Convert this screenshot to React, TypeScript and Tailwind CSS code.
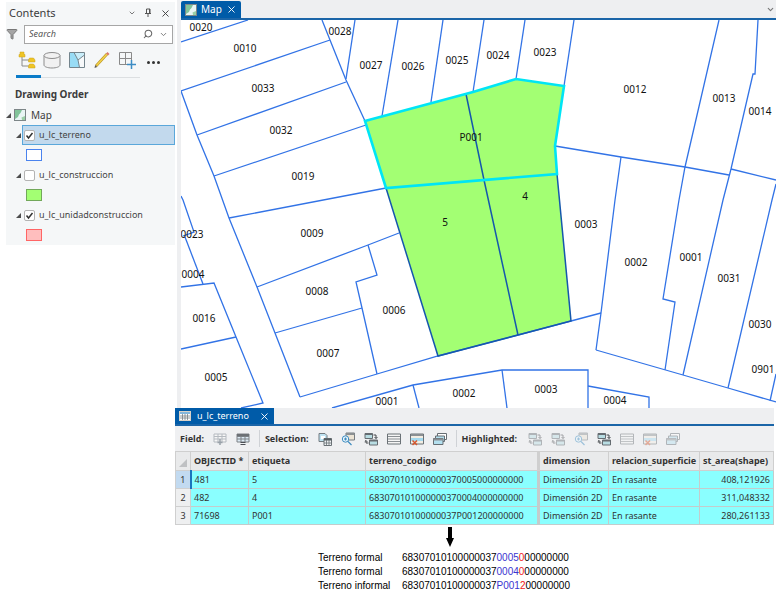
import React, { useState } from 'react';
import { ChevronDown, Filter, Search, X } from 'lucide-react';

type Point = [number, number];

const parcelLines: string[] = [
    '181,42 248,20',
    '181,91 330,40',
    '322,20 330,40 346,80 365,121',
    '355,20 346,79',
    '197,135 346,82',
    '214,176 366,125',
    '181,91 197,135 214,176 229,218 257,287 275,333 300,397',
    '229,218 386,188',
    '181,196 183,200 194,232 183,236',
    '185,237 203,284',
    '181,287 214,283 236,337 263,403 241,408',
    '181,349 236,337',
    '257,287 368,245 399,233',
    '368,245 377,275 356,282 362,308 377,374',
    '275,333 362,308',
    '300,397 377,374 438,356 518,335 571,321 601,313',
    '332,408 413,385 502,370 588,370 588,408',
    '413,385 419,408',
    '502,370 507,408',
    '588,386 649,397 649,408',
    '398,20 382,116',
    '443,20 431,102',
    '484,20 473,92',
    '525,20 516,79',
    '574,20 564,86',
    '555,146 621,157 685,167 729,175',
    '621,157 615,200 601,313 596,350',
    '719,20 685,167 679,200 663,299 675,302 665,370',
    '758,20 755,74 753,74 731,169 723,200 683,375',
    '731,169 776,180',
    '776,184 772,200 728,388',
    '596,350 683,375 728,388 776,402',
    '776,374 770,401',
];

const parcelLabels: { text: string; at: Point }[] = [
    { text: '0020', at: [201, 27] },
    { text: '0010', at: [245, 48] },
    { text: '0033', at: [263, 88] },
    { text: '0032', at: [281, 130] },
    { text: '0019', at: [303, 176] },
    { text: '0028', at: [340, 31] },
    { text: '0027', at: [371, 65] },
    { text: '0026', at: [413, 66] },
    { text: '0025', at: [457, 60] },
    { text: '0024', at: [498, 55] },
    { text: '0023', at: [545, 52] },
    { text: '0012', at: [635, 89] },
    { text: '0013', at: [724, 98] },
    { text: '0014', at: [760, 111] },
    { text: 'P001', at: [471, 137] },
    { text: '4', at: [525, 196] },
    { text: '5', at: [445, 222] },
    { text: '0023', at: [192, 234] },
    { text: '0004', at: [193, 274] },
    { text: '0016', at: [204, 318] },
    { text: '0005', at: [216, 377] },
    { text: '0009', at: [312, 233] },
    { text: '0008', at: [317, 291] },
    { text: '0007', at: [328, 353] },
    { text: '0006', at: [394, 310] },
    { text: '0001', at: [387, 401] },
    { text: '0002', at: [464, 393] },
    { text: '0003', at: [546, 389] },
    { text: '0003', at: [586, 224] },
    { text: '0002', at: [636, 262] },
    { text: '0001', at: [691, 257] },
    { text: '0031', at: [729, 278] },
    { text: '0030', at: [760, 324] },
    { text: '0901', at: [763, 369] },
    { text: '0004', at: [615, 400] },
];

const rows = [
    { id: '481', etiqueta: '5', codigo: '683070101000000370005000000000', area: '408,121926' },
    { id: '482', etiqueta: '4', codigo: '683070101000000370004000000000', area: '311,048332' },
    { id: '71698', etiqueta: 'P001', codigo: '68307010100000037P001200000000', area: '280,261133' },
];

const codes = [
    { label: 'Terreno formal', parcel: '0005', kind: '0' },
    { label: 'Terreno formal', parcel: '0004', kind: '0' },
    { label: 'Terreno informal', parcel: 'P001', kind: '2' },
];

const MapIcon: React.FC = () => (
    <svg viewBox="0 0 12 12" className="h-3 w-3 shrink-0" aria-hidden="true">
        <rect x="0.5" y="0.5" width="11" height="11" fill="#e9f5f4" stroke="#7d8688" />
        <path d="M1 1h7L6.500 4 5 5.500 4 8 1 10Z" fill="#82c49a" />
        <path d="M7.500 8.500 11 7v4H8Z" fill="#9bcfa6" />
    </svg>
);

const TableIcon: React.FC = () => (
    <svg viewBox="0 0 12 10" className="h-2.5 w-3 shrink-0" aria-hidden="true">
        <rect x="0.5" y="0.5" width="11" height="9" fill="#fff" stroke="#d9d2c8" />
        <path d="M1 1h10v2H1z" fill="#82b6dc" />
        <path d="M3.500 3v6M6 3v6M8.500 3v6M1 5h10M1 7h10" stroke="#6c747a" strokeWidth="0.7" />
    </svg>
);

const DrawingOrderIcon = () => (
    <svg viewBox="0 0 18 18" className="h-[18px] w-[18px]" aria-hidden="true">
        <path d="M4 6v9h7M4 9h7" fill="none" stroke="#8a8a8a" />
        <path d="M1 6V3.500h1V1h4v2.500h1V6ZM10.500 11V9l1-2h4l1.500 2v2ZM10.500 17v-2l1-2h4l1.500 2v2Z" fill="#efc526" stroke="#c9a11c" strokeWidth="0.5" />
    </svg>
);

const DataSourceIcon = () => (
    <svg viewBox="0 0 18 18" className="h-[18px] w-[18px]" fill="#f1f1f1" stroke="#8d8d8d" aria-hidden="true">
        <path d="M1 4.500v9.500c0 1.700 3.500 3 8 3s8-1.300 8-3V4.500" />
        <ellipse cx="9" cy="4.500" rx="8" ry="3" />
    </svg>
);

const SelectionIcon = () => (
    <svg viewBox="0 0 18 18" className="h-[18px] w-[18px]" aria-hidden="true">
        <path d="M1.500 1.500h15v15h-15z" fill="#f7f9fa" />
        <path d="M1.500 1.500h4.500L10 9l1.500 7.500h-10Z" fill="#98dcf5" />
        <path d="M6 1.500h10.500V4L10 9Z" fill="#c9eefa" />
        <path d="M1.500 1.500h15v15h-15z" fill="none" stroke="#74858d" />
        <path d="M6 1.500 10 9l6.500-5M10 9l1.500 7.500" fill="none" stroke="#74858d" />
    </svg>
);

const EditingIcon = () => (
    <svg viewBox="0 0 18 18" className="h-[18px] w-[18px]" aria-hidden="true">
        <path d="M3 15 14 3" stroke="#b69324" strokeWidth="2.600" />
        <path d="M3.500 14.500 14 3" stroke="#f4d24a" strokeWidth="1.600" />
        <path d="m1.500 17 .7-3 2 2Z" fill="#5f5a50" />
        <path d="m13 2.500 1.500-1.500 2 2L15 4.500Z" fill="#d9786a" />
    </svg>
);

const SnappingIcon = () => (
    <svg viewBox="0 0 18 18" className="h-[18px] w-[18px]" fill="none" aria-hidden="true">
        <path d="M9 13.500H1.500v-12h12V9M7.500 1.500v12M1.500 7.500h12" stroke="#8a8a8a" />
        <path d="M13.500 9v9M9 13.500h9" stroke="#3c8cc4" strokeWidth="1.500" />
    </svg>
);

const PinIcon = () => (
    <svg viewBox="0 0 8 10" className="h-2.5 w-2" fill="none" stroke="#555" aria-hidden="true">
        <path d="M2.500 5.500V1h3.500v4.500M1 5.500h6M4 5.500V9M5.500 1v4.500" />
    </svg>
);

type GlyphName = 'addField' | 'calcField' | 'byAttributes' | 'zoom' | 'switch' | 'clear' | 'delete' | 'copy';

const glyphs: Record<GlyphName, React.ReactNode> = {
    addField: (
        <>
            <path d="M1 2h12v8H1zM1 4.500h12M1 7h12M5 2v8M9 2v8" fill="#f6f6f6" stroke="#b5bac0" />
            <path d="M7 7v6M4.500 10.500h5" stroke="#9aa2aa" strokeWidth="1.500" />
        </>
    ),
    calcField: (
        <>
            <path d="M1 2h12v8H1zM1 4.500h12M1 7h12M5 2v8M9 2v8" fill="#dceaf4" stroke="#7c8186" />
            <path d="M1 2h12v2H1z" fill="#6c7075" />
            <path d="M4.500 10.500h5M4.500 12.500h5" stroke="#4a4f55" />
        </>
    ),
    byAttributes: (
        <>
            <path d="M1 1.500h6l2 2v6H1z" fill="#bfe3f2" stroke="#737b80" />
            <path d="M3 4h4v3H3z" fill="#fff" />
            <path d="M6 6.500h7.500v7H6z" fill="#eef2f4" stroke="#6b7277" />
            <path d="M6 6.500h7.500v2H6z" fill="#555c61" />
            <path d="M6 11h7.500M8.500 8v5M11 8v5" stroke="#6b7277" strokeWidth="0.800" />
        </>
    ),
    zoom: (
        <>
            <path d="M5 1h8.500v7H5z" fill="#ece4d5" stroke="#777c80" />
            <path d="M5 1h8.500v2H5z" fill="#8b9093" />
            <circle cx="4.500" cy="7" r="3.200" fill="#eaf6fd" stroke="#3e8cc0" />
            <path d="M3 7h3M4.500 5.500v3M7 9.500l3.500 3.500" stroke="#3e8cc0" strokeWidth="1.200" />
        </>
    ),
    switch: (
        <>
            <path d="M1 1.500h7.500v5H1zM5.500 8h8v5h-8z" fill="#b8dde3" stroke="#666d72" />
            <path d="M1 1.500h7.500v1.500H1zM5.500 8h8v1.500h-8z" fill="#666d72" />
            <path d="M9.500 3h2.500v3.500M10.500 5 12 6.500 13.500 5M4.500 11H2V8.500M.7 9.800 2 8.500l1.300 1.300" fill="none" stroke="#44494d" />
        </>
    ),
    clear: (
        <>
            <path d="M.5 2h13v10H.5z" fill="#f5f5f5" stroke="#6b7277" />
            <path d="M1 4.500h12M1 7h12M1 9.500h12" stroke="#8a8f93" />
        </>
    ),
    delete: (
        <>
            <path d="M.5 2h13v10H.5z" fill="#f2ede3" stroke="#6b7277" />
            <path d="M1 6h12v3H1z" fill="#a4d9ee" />
            <path d="M1 2h12v2H1z" fill="#8a8f93" />
            <path d="M2.500 8.500 7 13M7 8.500 2.500 13" stroke="#d4572f" strokeWidth="1.500" />
        </>
    ),
    copy: (
        <>
            <path d="M4.500 1.500h9v6h-9z" fill="#fff" stroke="#666d72" />
            <path d="M2.500 4h9v5.500h-9z" fill="#b4e0ef" stroke="#666d72" />
            <path d="M.5 6.500h9.500v6H.5z" fill="#b4e0ef" stroke="#666d72" />
            <path d="M.5 6.500h9.500v2H.5z" fill="#8a8f93" />
        </>
    ),
};

const ToolButton: React.FC<{ name: GlyphName; label: string; muted?: boolean }> = ({ name, label, muted }) => (
    <button type="button" aria-label={label} className={muted ? 'h-3.5 w-3.5 shrink-0 opacity-45' : 'h-3.5 w-3.5 shrink-0'}>
        <svg viewBox="0 0 14 14" className="h-3.5 w-3.5" fill="none" aria-hidden="true">
            {glyphs[name]}
        </svg>
    </button>
);

const Triangle: React.FC = () => (
    <svg viewBox="0 0 5 5" className="h-[5px] w-[5px] shrink-0" aria-hidden="true">
        <path d="M5 0v5H0Z" fill="#4d4d4d" />
    </svg>
);

interface LayerProps {
    name: string;
    swatch: string;
    initial?: boolean;
    selected?: boolean;
}

const Layer: React.FC<LayerProps> = ({ name, swatch, initial = false, selected = false }) => {
    const [visible, setVisible] = useState(initial);
    return (
        <li>
            <div className="flex h-5 items-center">
                <button type="button" aria-label={`Collapse ${name}`} className="flex w-4 shrink-0 justify-center pl-2">
                    <Triangle />
                </button>
                <label
                    className={`flex h-5 flex-1 items-center gap-1 border pl-px text-[9px] text-[#444] ${selected ? 'border-[#5aa7da] bg-[#c2d9ed]' : 'border-transparent'}`}
                >
                    <span className="grid h-[11px] w-[11px] shrink-0">
                        <input
                            type="checkbox"
                            checked={visible}
                            onChange={(e) => setVisible(e.target.checked)}
                            className="col-start-1 row-start-1 h-[11px] w-[11px] appearance-none rounded-xs border border-[#b3b3b3] bg-white"
                        />
                        {visible && (
                            <svg viewBox="0 0 11 11" className="pointer-events-none col-start-1 row-start-1 h-[11px] w-[11px]" aria-hidden="true">
                                <path d="m2.500 5.500 2 2.500 4-5" fill="none" stroke="#333" strokeWidth="1.500" />
                            </svg>
                        )}
                    </span>
                    {name}
                </label>
            </div>
            <div className="flex h-5 items-center pl-5">
                <span className={`h-3 w-4 border ${swatch}`} />
            </div>
        </li>
    );
};

const ContentsPanel: React.FC = () => (
    <aside className="ml-1.5 mt-0.5 w-[169px] shrink-0 self-start bg-[#f5f7f8] text-[#3c3c3c]">
        <div className="flex h-[22px] items-center pl-[3px] pr-1">
            <h2 className="flex-1 text-[11px]">Contents</h2>
            <div className="flex items-center gap-2">
                <button type="button" aria-label="Menu"><ChevronDown size={8} /></button>
                <button type="button" aria-label="Pin"><PinIcon /></button>
                <button type="button" aria-label="Close"><X size={11} strokeWidth={2} /></button>
            </div>
        </div>
        <div className="flex h-5 items-center gap-1.5 pr-0.5">
            <Filter size={12} fill="#a5a5a5" stroke="#777" className="shrink-0" />
            <div className="flex h-[19px] min-w-0 flex-1 items-center gap-1.5 border border-[#a6a6a6] bg-white px-1">
                <input type="text" aria-label="Search" placeholder="Search" className="min-w-0 flex-1 text-[9px] italic outline-none placeholder:text-[#555]" />
                <Search size={10} strokeWidth={2.5} className="shrink-0 -scale-x-100 text-[#666]" />
                <ChevronDown size={9} strokeWidth={2.5} className="shrink-0 text-[#777]" />
            </div>
        </div>
        <nav className="flex items-center gap-[7px] pl-3 pt-[7px]">
            <button type="button" aria-label="List by drawing order"><DrawingOrderIcon /></button>
            <button type="button" aria-label="List by data source"><DataSourceIcon /></button>
            <button type="button" aria-label="List by selection"><SelectionIcon /></button>
            <button type="button" aria-label="List by editing"><EditingIcon /></button>
            <button type="button" aria-label="List by snapping"><SnappingIcon /></button>
            <button type="button" aria-label="More" className="flex gap-[2px] pl-1 pt-1">
                <span className="h-[3px] w-[3px] rounded-full bg-[#333]" />
                <span className="h-[3px] w-[3px] rounded-full bg-[#333]" />
                <span className="h-[3px] w-[3px] rounded-full bg-[#333]" />
            </button>
        </nav>
        <div className="ml-2.5 mt-1.5 h-[3px] w-[124px] border-b border-[#dcdfe1]">
            <div className="h-[3px] w-[25px] bg-[#0a7bc8]" />
        </div>
        <h3 className="pb-[3px] pl-[9px] pt-2 text-[10px] leading-4 font-bold">Drawing Order</h3>
        <div className="flex h-5 items-center gap-[3px]">
            <button type="button" aria-label="Collapse Map"><Triangle /></button>
            <MapIcon />
            <span className="pl-0.5 text-[10px]">Map</span>
        </div>
        <ul>
            <Layer name="u_lc_terreno" swatch="border-[#4a83ee] bg-white" initial selected />
            <Layer name="u_lc_construccion" swatch="border-[#72a85a] bg-[#a3ff73]" />
            <Layer name="u_lc_unidadconstruccion" swatch="border-[#ff6565] bg-[#ffbebe]" initial />
        </ul>
    </aside>
);

const MapView: React.FC = () => (
    <section className="min-w-0 flex-1">
        <div className="flex h-5 items-end justify-between border-b-2 border-[#1b65a8] bg-[#eeeff1]">
            <div className="flex h-[17px] w-[60px] items-center gap-1 rounded-t-xs bg-[#005ba8] px-1 text-[10px] text-white">
                <MapIcon />
                <span className="flex-1">Map</span>
                <button type="button" aria-label="Close Map"><X size={11} strokeWidth={2} /></button>
            </div>
            <button type="button" aria-label="View list" className="mb-1 mr-px text-[#777]"><ChevronDown size={9} strokeWidth={3} /></button>
        </div>
        <svg viewBox="181 20 595 388" className="block w-full bg-white" role="img" aria-label="Parcel map">
            <path d="M365 121 473 92 516 79 564 86 555 146 557 174 571 321 518 335 438 356 386 188Z" fill="#a3ff73" />
            {parcelLines.map((points) => (
                <polyline key={points} points={points} fill="none" stroke="#3273e6" strokeWidth="1.300" />
            ))}
            <path d="M466 94 484 180 518 335M386 188 438 356 518 335 571 321 557 174" fill="none" stroke="#1557ad" strokeWidth="1.500" />
            <path d="M365 121 473 92 516 79 564 86 555 146 557 174 386 188Z" fill="none" stroke="#00e5f5" strokeWidth="2.600" />
            {parcelLabels.map(({ text, at }) => (
                <text key={`${text}-${at[0]}`} x={at[0]} y={at[1] + 4} textAnchor="middle" fontSize="10" fill="#111">
                    {text}
                </text>
            ))}
        </svg>
    </section>
);

const AttributeTable: React.FC = () => (
    <section className="ml-[175px] mr-0.5 text-[#333]">
        <div className="border-b-2 border-[#1b65a8] bg-[#eeeff1]">
            <div className="flex h-4 w-[99px] items-center gap-1.5 bg-[#005ba8] px-1 text-[9px] text-white">
                <TableIcon />
                <span className="flex-1">u_lc_terreno</span>
                <button type="button" aria-label="Close u_lc_terreno"><X size={11} strokeWidth={2} /></button>
            </div>
        </div>
        <div className="flex h-[25px] items-center gap-[9px] bg-[#eff0f2] pl-[5px] text-[9px] font-bold">
            <span>Field:</span>
            <ToolButton name="addField" label="Add field" />
            <ToolButton name="calcField" label="Calculate field" />
            <span className="h-[17px] w-px bg-[#cfd2d6]" />
            <span className="-ml-1">Selection:</span>
            <ToolButton name="byAttributes" label="Select by attributes" />
            <ToolButton name="zoom" label="Zoom to selection" />
            <ToolButton name="switch" label="Switch selection" />
            <ToolButton name="clear" label="Clear selection" />
            <ToolButton name="delete" label="Delete selection" />
            <ToolButton name="copy" label="Copy selection" />
            <span className="h-[17px] w-px bg-[#cfd2d6]" />
            <span className="-ml-1 mr-0.5">Highlighted:</span>
            <ToolButton name="switch" label="Unselect highlighted" muted />
            <ToolButton name="switch" label="Reselect highlighted" muted />
            <ToolButton name="zoom" label="Zoom to highlighted" muted />
            <ToolButton name="switch" label="Switch highlighted" />
            <ToolButton name="clear" label="Clear highlighted" muted />
            <ToolButton name="delete" label="Delete highlighted" muted />
            <ToolButton name="copy" label="Copy highlighted" muted />
        </div>
        <table className="w-full table-fixed border-collapse text-left text-[9px] whitespace-nowrap">
            <colgroup>
                <col className="w-[15px]" />
                <col className="w-[58px]" />
                <col className="w-[117px]" />
                <col />
                <col className="w-[70px]" />
                <col className="w-[91px]" />
                <col className="w-[74px]" />
            </colgroup>
            <thead>
                <tr className="h-[19px] bg-[#e9eaeb] [&>th]:border [&>th]:border-[#cfcfcf] [&>th]:py-0 [&>th]:pl-[3px]">
                    <th aria-label="Row">
                        <svg viewBox="0 0 8 8" className="mt-1 h-2 w-2" aria-hidden="true">
                            <path d="M8 0v8H0Z" fill="#bfc1c3" />
                        </svg>
                    </th>
                    <th>OBJECTID *</th>
                    <th>etiqueta</th>
                    <th className="border-r-3!">terreno_codigo</th>
                    <th>dimension</th>
                    <th>relacion_superficie</th>
                    <th>st_area(shape)</th>
                </tr>
            </thead>
            <tbody>
                {rows.map((row, index) => (
                    <tr key={row.id} className="h-[18px] bg-[#8affff] [&>td]:border [&>td]:border-[#c3cccc] [&>td]:px-[3px] [&>td]:py-0">
                        <th
                            scope="row"
                            className={`border border-[#cfcfcf] py-0 text-center text-[9px] font-normal ${index === 0 ? 'border-r-2 border-r-[#1b75bc] bg-[#c2daf0]' : 'bg-[#eeeff0]'}`}
                        >
                            {index + 1}
                        </th>
                        <td>{row.id}</td>
                        <td>{row.etiqueta}</td>
                        <td className="border-r-3!">{row.codigo}</td>
                        <td>Dimensión 2D</td>
                        <td>En rasante</td>
                        <td className="text-right">{row.area}</td>
                    </tr>
                ))}
            </tbody>
        </table>
    </section>
);

const CodeExplanation: React.FC = () => (
    <section className="ml-[175px] pl-[143px] pt-0.5 font-['Liberation_Sans',sans-serif] text-[10px] leading-[14px] text-black">
        <svg viewBox="0 0 8 20" className="ml-[128px] h-5 w-2" aria-hidden="true">
            <path d="M2 0h4v11h2L4 20 0 11h2Z" />
        </svg>
        <dl className="grid grid-cols-[84px_auto] justify-start pt-1 whitespace-nowrap">
            {codes.map(({ label, parcel, kind }) => (
                <React.Fragment key={parcel}>
                    <dt>{label}</dt>
                    <dd>
                        68307010100000037<span className="text-[#3a35d0]">{parcel}</span>
                        <span className="text-[#f01818]">{kind}</span>00000000
                    </dd>
                </React.Fragment>
            ))}
        </dl>
    </section>
);

const App: React.FC = () => (
    <main className="bg-white font-['Noto_Sans','Open_Sans',sans-serif]">
        <div className="flex">
            <ContentsPanel />
            <div className="ml-0.5 w-1 shrink-0 bg-[#eeeff1]" />
            <MapView />
        </div>
        <AttributeTable />
        <CodeExplanation />
    </main>
);

export default App;
